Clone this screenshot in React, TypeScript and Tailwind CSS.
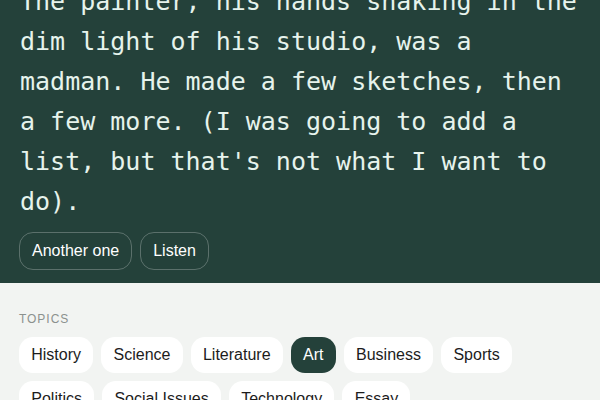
const TOPICS = ["History", "Science", "Literature", "Art", "Business", "Sports", "Politics", "Social Issues", "Technology", "Essay"];

export default function App() {
  const active = "Art";
  return (
    <div className="w-[600px] h-[400px] overflow-hidden bg-[#f2f4f2] font-['Liberation_Sans',Arial,sans-serif]">
      <div className="bg-[#24413a] px-5 pb-[13px]">
        <p className="-mt-[18px] font-['DejaVu_Sans_Mono',monospace] text-[25px] leading-[40px] text-[#e6f3ec]">
          The painter, his hands shaking in the dim light of his studio, was a madman. He made a few sketches, then a few more. (I was going to add a list, but that's not what I want to do).
        </p>
        <div className="mt-[10px] flex gap-2 -ml-px">
          {["Another one", "Listen"].map(b => (
            <button key={b} className="h-[38px] px-3 rounded-[14px] border border-white/25 text-white text-base">
              {b}
            </button>
          ))}
        </div>
      </div>
      <div className="px-5 pt-[28px]">
        <div className="text-[12px] leading-4 tracking-[0.08em] text-[#8b918e] -ml-px">TOPICS</div>
        <div className="mt-[10px] flex flex-wrap gap-2 -ml-px">
          {TOPICS.map(t => (
            <span
              key={t}
              className={
                t === active
                  ? "h-9 px-[12.25px] rounded-[14px] flex items-center text-base bg-[#24413a] text-white"
                  : "h-9 px-[12.25px] rounded-[14px] flex items-center text-base bg-white text-[#1c1c1c]"
              }
            >
              {t}
            </span>
          ))}
        </div>
      </div>
    </div>
  );
}
